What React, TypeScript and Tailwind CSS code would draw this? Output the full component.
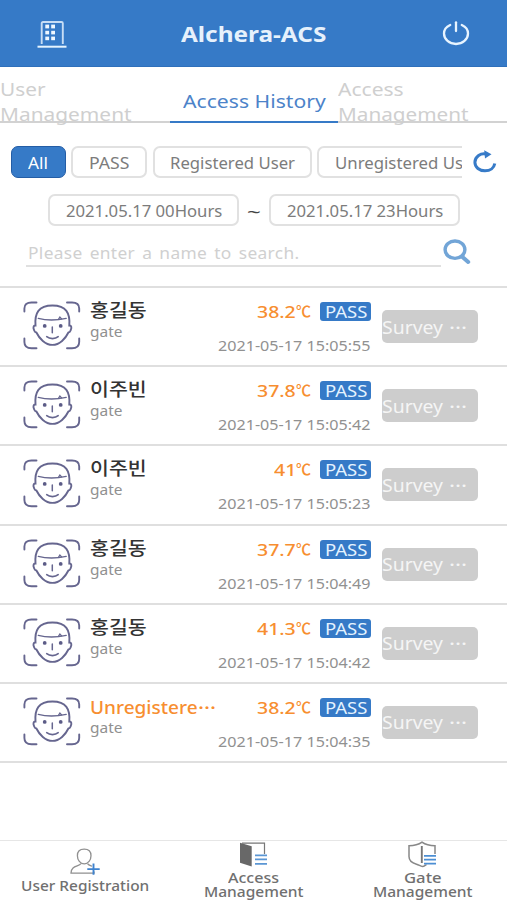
import { useLayoutEffect, useRef, useState, type ReactNode } from "react";
import clsx from "clsx";

/** A single line of text stretched horizontally to a given width. */
function Fit({ w, className, children }: { w: number; className?: string; children: ReactNode }) {
  const ref = useRef<HTMLSpanElement>(null);
  const [scale, setScale] = useState(1);
  useLayoutEffect(() => {
    if (ref.current) setScale(w / ref.current.offsetWidth);
  }, [w]);
  return (
    <span className={clsx("block shrink-0", className)} style={{ width: w }}>
      <span ref={ref} className="inline-block origin-left whitespace-nowrap align-top" style={{ transform: `scaleX(${scale})` }}>
        {children}
      </span>
    </span>
  );
}

function BuildingIcon() {
  return (
    <svg width="30" height="28" viewBox="0 0 30 28" fill="none">
      <path d="M4.7 23V2.3Q4.7 1 6 1H24.5Q25.8 1 25.8 2.3V23" stroke="#c7ddf5" strokeWidth="1.9" />
      <path d="M0.5 25.7H29.5" stroke="#e6f4ff" strokeWidth="2" />
      <g fill="#eef7ff">
        <rect x="8.3" y="3.6" width="3.8" height="3.8" />
        <rect x="14.2" y="3.6" width="3.8" height="3.8" />
        <rect x="8.3" y="9.8" width="3.8" height="3.6" />
        <rect x="14.2" y="9.8" width="3.8" height="3.6" />
        <rect x="8.3" y="15.6" width="3.8" height="3.6" />
        <rect x="14.2" y="15.6" width="3.8" height="3.6" />
      </g>
    </svg>
  );
}

function PowerIcon() {
  return (
    <svg width="28" height="25" viewBox="0 0 28 25" fill="none" stroke="#e8f4ff" strokeWidth="2.3" strokeLinecap="round">
      <path d="M8.2 4C4.2 5.8 2 9 2 12.5C2 18.4 7.4 23 14 23S26 18.4 26 12.5C26 9 23.8 5.8 19.8 4" />
      <path d="M14 1.3V10" />
    </svg>
  );
}

function RefreshIcon() {
  return (
    <svg width="24" height="24" viewBox="0 0 24 24" fill="none">
      <path d="M14.5 4.3C7.5 2.1 1.9 6.8 1.9 12.3C1.9 17.4 6.5 20.8 12 20.8C17.3 20.8 21 17.8 21.8 13.4" stroke="#377bc8" strokeWidth="3" />
      <path d="M11.2 0.2L18.5 4.2L12 8.4Z" fill="#377bc8" />
    </svg>
  );
}

function SearchIcon() {
  return (
    <svg width="28" height="26" viewBox="0 0 28 26" fill="none" stroke="#72a5d7">
      <ellipse cx="12" cy="10.7" rx="9.9" ry="8.7" strokeWidth="3.4" />
      <path d="M18.9 17.4L25.2 23" strokeWidth="4" strokeLinecap="round" />
    </svg>
  );
}

function FaceIcon() {
  return (
    <svg width="58" height="50" viewBox="0 0 58 50" fill="none" stroke="#66668f" strokeWidth="1.9" strokeLinecap="round">
      <path d="M1.4 10.5V7.5Q1.4 1.5 8.5 1.5H13.5M44 1.5H49Q56.2 1.5 56.2 7.5V10.5M1.4 37.5V41Q1.4 47.3 8.5 47.3H13.5M44 47.3H49Q56.2 47.3 56.2 41V37.5" />
      <path d="M12.5 24.5C11.5 12 15.6 4.5 29.4 4.5C43.2 4.5 47.3 12 46.3 24.5C48.6 24.3 48.8 26.8 47.7 29.2C47.1 31 46.4 31.3 45.4 31.5C42.5 37.5 36.7 43.9 29.4 43.9C22.3 43.9 16.3 37.5 13.4 31.5C12.4 31.3 11.7 31 11.1 29.2C10 26.8 10.2 24.3 12.5 24.5Z" />
      <path d="M15.3 17.4C23 19.4 34.5 19.2 43.2 17.4" strokeWidth="1.4" />
      <path d="M35.4 18.4L36.9 16L38.6 17.9" strokeWidth="1.2" />
      <path d="M29.3 26V31.8" strokeWidth="1.5" />
      <path d="M23.7 35.7C26.7 38.3 32.3 38.3 35.2 35.7" strokeWidth="1.6" />
      <circle cx="21.7" cy="24.9" r="1.9" fill="#5c5c87" stroke="none" />
      <circle cx="37.7" cy="24.9" r="1.9" fill="#5c5c87" stroke="none" />
    </svg>
  );
}

function UserAddIcon() {
  return (
    <svg width="30" height="27" viewBox="0 0 30 27" fill="none">
      <path d="M14.2 1.2C9.7 1.2 7.4 4 7.4 7.7C7.4 12 10.2 15.8 14.2 15.8S21 12 21 7.7C21 4 18.7 1.2 14.2 1.2Z" stroke="#909090" strokeWidth="1.3" />
      <path d="M11 15.7C8.5 18.8 1.2 17.4 1 25.1H24V23.5M17.5 15.7C18.7 17.4 20.5 17.6 22 18.1" stroke="#909090" strokeWidth="1.3" />
      <path d="M23.5 15.5V26.7M17.3 21.1H29.7" stroke="#3f83cf" strokeWidth="1.9" />
    </svg>
  );
}

function DoorIcon() {
  return (
    <svg width="29" height="25" viewBox="0 0 29 25" fill="none">
      <path d="M3 1.2H25.5V12" stroke="#777" strokeWidth="1.2" />
      <path d="M1 0.8L12.7 4.3V24.5L1 20.7Z" fill="#686868" />
      <path d="M16 13.4H28M16 17.4H28M16 21.8H28" stroke="#5b96d4" strokeWidth="1.7" />
    </svg>
  );
}

function ShieldIcon() {
  return (
    <svg width="29" height="27" viewBox="0 0 29 27" fill="none">
      <path d="M27 13V4.8C22.5 4.8 17.5 3.7 14 1.2C10.5 3.7 5.5 4.8 1 4.8V15.5C1 20 5.4 22.4 8.5 23.2C11 23.8 12.5 25.5 14.5 25.5C16.5 25.5 17.4 23.8 18.5 23.7" stroke="#888" strokeWidth="1.5" />
      <path d="M13.8 5V22" stroke="#777" strokeWidth="1.9" />
      <path d="M16 14.8H28M16 18.7H28M16 22.7H28" stroke="#4c8ed3" strokeWidth="1.7" />
    </svg>
  );
}

const records = [
  { name: "홍길동", temp: "38.2", tw: 39, time: "2021-05-17 15:05:55" },
  { name: "이주빈", temp: "37.8", tw: 39, time: "2021-05-17 15:05:42" },
  { name: "이주빈", temp: "41", tw: 22, time: "2021-05-17 15:05:23" },
  { name: "홍길동", temp: "37.7", tw: 39, time: "2021-05-17 15:04:49" },
  { name: "홍길동", temp: "41.3", tw: 39, time: "2021-05-17 15:04:42" },
  { name: "Unregistere", temp: "38.2", tw: 39, time: "2021-05-17 15:04:35", unknown: true },
];

const pill = "flex shrink-0 items-center justify-center rounded-[7px] border-2 border-[#e1e1e1] text-[#7c7c7c]";

export default function App() {
  return (
    <div className="flex h-[900px] w-[507px] flex-col overflow-hidden bg-white font-['Noto_Sans','Noto_Sans_CJK_KR',sans-serif]">
      <header className="flex h-[67px] shrink-0 items-center justify-between border-b border-[#2f70bb] bg-[#367ac7] px-[37px]">
        <div className="pt-[3px]"><BuildingIcon /></div>
        <Fit w={145} className="pt-[2px] text-[20.5px] leading-[26px] font-bold text-[#e6f1fc]">Alchera-ACS</Fit>
        <div className="pl-[2px]"><PowerIcon /></div>
      </header>

      <nav className="flex h-[56px] shrink-0 text-[18.5px] leading-[25px] text-[#cfcfcf]">
        <div className="w-[170px] border-b-2 border-[#d2d2d2] pt-[9px]">
          <Fit w={45}>User</Fit>
          <Fit w={132}>Management</Fit>
        </div>
        <div className="w-[168px] border-b-2 border-[#367ac7] pt-[21px] pl-[12.5px] text-[#4c83c9]">
          <Fit w={143}>Access History</Fit>
        </div>
        <div className="w-[169px] border-b-2 border-[#d2d2d2] pt-[9px]">
          <Fit w={66}>Access</Fit>
          <Fit w={131}>Management</Fit>
        </div>
      </nav>

      <section className="flex h-[163px] shrink-0 flex-col text-[15.5px] leading-[22px]">
        <div className="flex pt-[23px] pl-[10.5px]">
          <div className="flex w-[451.5px] gap-[5.5px] overflow-hidden">
            <div className="flex h-[32px] w-[55px] shrink-0 items-center justify-center rounded-[7px] border-[1.5px] border-[#245da5] bg-[#367ac7] pt-[2px] text-white">
              <Fit w={20}>All</Fit>
            </div>
            <div className={clsx(pill, "h-[32px] w-[76px] pt-[2px]")}><Fit w={41}>PASS</Fit></div>
            <div className={clsx(pill, "h-[32px] w-[159px] pt-[2px]")}><Fit w={125}>Registered User</Fit></div>
            <div className={clsx(pill, "h-[32px] w-[180px] pt-[2px]")}><Fit w={144}>Unregistered User</Fit></div>
          </div>
          <div className="pt-[4px] pl-[11px]"><RefreshIcon /></div>
        </div>
        <div className="flex pt-[16px] pl-[48px]">
          <div className={clsx(pill, "h-[32px] w-[191px] pt-[2px]")}><Fit w={156}>2021.05.17 00Hours</Fit></div>
          <div className="flex w-[30px] items-center justify-center pt-[4px] font-medium text-[#444]"><Fit w={14}>~</Fit></div>
          <div className={clsx(pill, "h-[32px] w-[191px] pt-[2px]")}><Fit w={156}>2021.05.17 23Hours</Fit></div>
        </div>
        <div className="flex pt-[12px] pl-[26px]">
          <div className="h-[29px] w-[415px] border-b-2 border-[#e0e0e0] pt-[4px] pl-[2px] text-[#d0d0d0]">
            <Fit w={272}><span className="tracking-[0.3px] [word-spacing:2px]">Please enter a name to search.</span></Fit>
          </div>
          <div className="pt-[1px] pl-[2px]"><SearchIcon /></div>
        </div>
      </section>

      <ul className="flex h-[477.2px] shrink-0 flex-col border-b-2 border-[#dfdfdf]">
        {records.map((r) => (
          <li key={r.time} className="flex h-[79.2px] shrink-0 border-t-2 border-[#dfdfdf]">
            <div className="w-[90px] pt-[13px] pl-[23px]"><FaceIcon /></div>
            <div className="w-[128px] pt-[11px]">
              {r.unknown ? (
                <div className="flex h-[23px] text-[18.5px] leading-[23px] font-medium text-[#f78e30]">
                  <Fit w={108}>{r.name}</Fit>
                  <Fit w={18}>···</Fit>
                </div>
              ) : (
                <Fit w={57} className="h-[23px] text-[18px] leading-[23px] font-medium text-[#333]">{r.name}</Fit>
              )}
              <Fit w={32} className="text-[13.5px] leading-[20px] text-[#909090]">gate</Fit>
            </div>
            <div className="w-[153px] pt-[14px]">
              <div className="flex h-[19px] justify-end">
                <Fit w={r.tw} className="text-[16px] leading-[20px] font-medium text-[#f78e30]">{r.temp}</Fit>
                <Fit w={15} className="mr-[9px] font-['Noto_Sans_CJK_KR',sans-serif] text-[15px] leading-[18px] font-medium text-[#f78e30]">℃</Fit>
                <div className="h-[19px] w-[51px] rounded-[3px] bg-[#367ac7] pt-px pl-[5px]">
                  <Fit w={43} className="text-[15.5px] leading-[19px] text-[#e4f3ff]">PASS</Fit>
                </div>
              </div>
              <Fit w={153} className="pt-[15px] text-[13.5px] leading-[20px] text-[#919191]">{r.time}</Fit>
            </div>
            <div className="pt-[22px] pl-[10.5px]">
              <div className="flex h-[33px] w-[96px] items-center gap-[6px] rounded-[5px] bg-[#cdcdcd] text-[17.5px] leading-[24px] text-[#f5f5f5]">
                <Fit w={61}>Survey</Fit>
                <Fit w={18}>···</Fit>
              </div>
            </div>
          </li>
        ))}
      </ul>

      <footer className="mt-auto grid h-[60px] shrink-0 grid-cols-3 border-t border-[#e6e6e6] text-[13.5px] leading-[14px] font-medium text-[#707070]">
        <div className="flex flex-col items-center pt-[7px]">
          <UserAddIcon />
          <Fit w={128} className="pt-[4px]">User Registration</Fit>
        </div>
        <div className="flex flex-col items-center pt-[1px]">
          <DoorIcon />
          <Fit w={51} className="pt-[4px]">Access</Fit>
          <Fit w={100}>Management</Fit>
        </div>
        <div className="flex flex-col items-center">
          <ShieldIcon />
          <Fit w={37} className="pt-[3px]">Gate</Fit>
          <Fit w={100}>Management</Fit>
        </div>
      </footer>
    </div>
  );
}
